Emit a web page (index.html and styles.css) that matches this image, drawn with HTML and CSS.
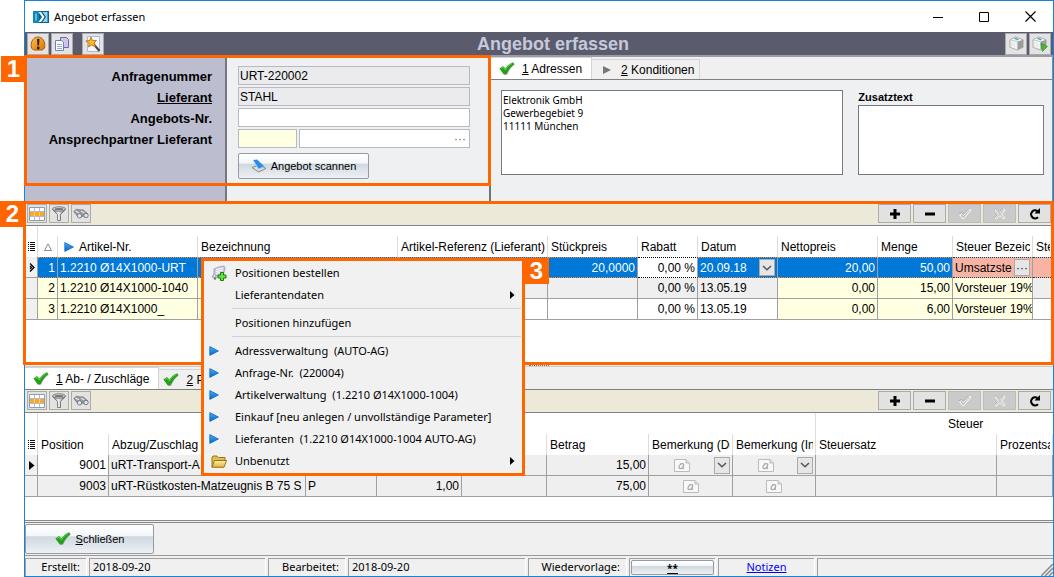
FILE: index.html
```html
<!DOCTYPE html>
<html lang="de">
<head>
<meta charset="utf-8">
<title>Angebot erfassen</title>
<link rel="stylesheet" href="styles.css">
</head>
<body>
<svg class="defs" aria-hidden="true">
  <defs>
    <linearGradient id="g-blue" x1="0" y1="0" x2="0" y2="1"><stop offset="0" stop-color="#45aefb"/><stop offset="1" stop-color="#0a62c4"/></linearGradient>
    <linearGradient id="g-orange" x1="0" y1="0" x2="1" y2="1"><stop offset="0" stop-color="#ffbe4a"/><stop offset="1" stop-color="#df7400"/></linearGradient>
    <linearGradient id="g-gray" x1="0" y1="0" x2="1" y2="0"><stop offset="0" stop-color="#5f5f5f"/><stop offset=".45" stop-color="#f2f2f2"/><stop offset="1" stop-color="#6b6b6b"/></linearGradient>
    <linearGradient id="g-folder" x1="0" y1="0" x2="0" y2="1"><stop offset="0" stop-color="#fff2a8"/><stop offset="1" stop-color="#e2b13c"/></linearGradient>
    <symbol id="check" viewBox="0 0 16 14"><path d="M1.5 7.2 4.8 5.3 7 8.1C9 4.800 11.400 2.500 14.800 1.200L15.800 2.600C12.400 5 10 8.200 8.200 12.600L5.800 12.900Z" fill="#777" opacity=".6"/><path d="M.4 6.400 4 4 6.400 6.600C8.400 3.600 10.800 1.400 14.200.3L15.200 2.200C11.800 4.600 9.600 7.800 7.600 12.200L4.800 12.400Z" fill="#25a01b"/><path d="M2 6.500 3.900 5.200 6.300 8C8.200 5 10.400 2.700 13.200 1.500" stroke="#66d251" fill="none"/></symbol>
    <symbol id="play" viewBox="0 0 10 10"><path d="M.8.6 9.400 5 .8 9.400Z" fill="url(#g-blue)" stroke="#0b6bce" stroke-width=".8"/></symbol>
    <symbol id="grid" viewBox="0 0 16 14"><path fill="#fff" stroke="#8c9cb8" d="M.5.5h15v13H.5Z"/><path fill="#f7a928" d="M1 4.500h14v5H1Z"/><path d="M5.500 1v12M10.500 1v12M1 4.500h14M1 9.500h14" stroke="#b6b9cf" fill="none"/><path d="M5.500 5v4M10.500 5v4" stroke="#ffcf70" fill="none"/></symbol>
    <symbol id="funnel" viewBox="0 0 16 15"><path d="M1.500 3.500 6.500 8.600V14.500H9.500V8.600L14.500 3.500Z" fill="url(#g-gray)" stroke="#666" stroke-width=".8"/><ellipse cx="8" cy="3" rx="6.500" ry="2.200" fill="#ddd" stroke="#666" stroke-width=".8"/><ellipse cx="8" cy="3.200" rx="4.500" ry="1.100" fill="#777"/></symbol>
    <symbol id="binoc" viewBox="0 0 16 12"><path d="M.8 3.500 3.500 1.200 7 2 10 1.800 15 6 13.500 9.500 10 8 6.500 9.500 3 6.500Z" fill="#9a9a9a" stroke="#6d6d6d" stroke-width=".7"/><path d="M2.500 3 6 5M8 3 11.500 5" stroke="#e8e8e8" stroke-width="1.200"/><circle cx="6.500" cy="7.800" r="2.200" fill="#d6e7f5" stroke="#666" stroke-width=".8"/><circle cx="13" cy="7.500" r="2.200" fill="#d6e7f5" stroke="#666" stroke-width=".8"/></symbol>
    <symbol id="plus" viewBox="0 0 10 10"><path d="M3.500 0h3v3.500H10v3H6.500V10h-3V6.500H0v-3h3.500Z"/></symbol>
    <symbol id="minus" viewBox="0 0 10 10"><path d="M0 3.500h10v3H0Z"/></symbol>
    <symbol id="tick" viewBox="0 0 14 12"><path d="M1.500 6.500 4 5.500 5.500 7.500 11 1.500 13 2 6 10.500 4.500 10.500Z" fill="#c4c4c4" stroke="#fff"/><path d="M.8 5.800 4 4.600 5.300 6.400 11 .6" fill="none" stroke="#999" stroke-width=".7"/></symbol>
    <symbol id="cross" viewBox="0 0 12 12"><path d="M1 2 2.500 1 6 4.500 9.500 1 11 2.200 7.500 6 11 9.800 9.500 11 6 7.500 2.500 11 1 9.800 4.500 6Z" fill="#c4c4c4" stroke="#fff"/><path d="M.5 1.800 2 .5 5.500 3.800 9 .5M.5 9.800 3.500 6.300" fill="none" stroke="#999" stroke-width=".7"/></symbol>
    <symbol id="reload" viewBox="0 0 12 12"><path d="M9 9.200A4 4 0 1 1 8.500 3.200" fill="none" stroke="#000" stroke-width="2.200"/><path d="M11 0V5.500H5.500Z"/></symbol>
    <symbol id="list" viewBox="0 0 7 9"><path d="M0 .5h1M0 2.500h1M0 4.500h1M0 6.500h1M0 8.500h1M2 .5h5M2 2.500h5M2 4.500h5M2 6.500h5M2 8.500h5" stroke="#111"/></symbol>
    <symbol id="chev" viewBox="0 0 10 6"><path d="M1 1 5 4.800 9 1" fill="none" stroke="#555" stroke-width="1.500"/></symbol>
    <symbol id="note" viewBox="0 0 16 13"><path d="M.5.500H12L15.500 4V12.500H.5Z" fill="#f8f8f8" stroke="#bbb"/><path d="M12 .5V4h3.500" fill="#ddd" stroke="#bbb"/><path d="M9.800 5.200C8 3.900 5 5.600 5 8.200 5 10.300 8 10.200 9.300 7.200L9.800 5.200 9 9.300 10 9.600M5.900 5.200 7.600 4.600" fill="none" stroke="#aaa" stroke-width="1.300"/></symbol>
    <symbol id="box" viewBox="0 0 16 16"><path d="M1 4 7 1 15 4V12L9 15 1 12Z" fill="#f5f5f5" stroke="#aaa"/><path d="M9 6 15 4V12L9 15Z" fill="#9b9b9b"/><path d="M1 4 9 6V15" fill="none" stroke="#c2c2c2"/><path d="M6 2.500 10 4" stroke="#3aa0c8" stroke-width="1.500"/><path d="M3 6v5M5.500 7v5" stroke="#ddd"/></symbol>
    <symbol id="folder" viewBox="0 0 16 13"><path d="M1 12V2.500L2 1h4l1.500 1.500H14V6" fill="#e5bc55" stroke="#9b7316"/><path d="M1 12.300 3.500 5.500H15.500L13 12.300Z" fill="url(#g-folder)" stroke="#9b7316"/></symbol>
  </defs>
</svg>

<main class="window">
  <header class="titlebar">
    <svg class="logo" viewBox="0 0 16 12"><path fill="#1585b8" d="M0 0h6v12H0Z"/><path fill="#0d5f91" d="M6 0h10v12H6Z"/><path d="M2 2.500h2v7H2Z" fill="#53c0e3"/><path d="M5.500 1H8l3.500 5L8 11H5.500L9 6Z" fill="#fff"/><path d="M9.500 1H14.500V11H9.500L13 6Z" fill="#8bd8ee"/></svg>
    <span class="caption">Angebot erfassen</span>
    <div class="sysbuttons">
      <button aria-label="Minimieren"><svg width="10" height="10"><path d="M0 5.500h10" stroke="#000"/></svg></button>
      <button aria-label="Maximieren"><svg width="10" height="10"><path d="M.5.500h9v9h-9Z" fill="none" stroke="#000"/></svg></button>
      <button aria-label="Fenster zumachen"><svg width="11" height="11"><path d="M.5.500l10 10M10.500.500l-10 10" stroke="#000" stroke-width="1.200"/></svg></button>
    </div>
  </header>

  <div class="mainbar">
    <div class="tools">
      <button class="tool" aria-label="Hinweis"><svg width="16" height="16" viewBox="0 0 16 16"><path d="M1.500 12C0 5 4 1 8 1s8 4 6.500 11l-2 2h-9Z" fill="url(#g-orange)" stroke="#a85b05"/><path d="M7 3h2.500L9 9.500H7.500Z" fill="#222"/><circle cx="8.200" cy="12" r="1.400" fill="#222"/></svg></button>
      <button class="tool" aria-label="Kopieren"><svg width="16" height="16" viewBox="0 0 16 16"><path d="M6.500 1.500h6l2 2v8h-8Z" fill="#cfc4ea" stroke="#7666a5"/><path d="M1.500 4.500h6l2 2v8h-8Z" fill="#fff" stroke="#6d7fb5"/><path d="M3 8.500h5M3 10.500h5M3 12.500h5" stroke="#8eaee0"/></svg></button>
      <button class="tool spaced" aria-label="Assistent"><svg width="16" height="16" viewBox="0 0 16 16"><path d="M2.500.500h12v15h-12Z" fill="#f4f8fd" stroke="#a7bad8"/><path d="M8.500 8 14.500 15" stroke="#444" stroke-width="2"/><path d="M6 1 7.500 4.500 11.500 4.500 9 7 10.500 11 6.700 9 3.500 11 4 7.200.8 5 4.800 4.400Z" fill="#ffb629" stroke="#bd6b0d" stroke-width=".8"/></svg></button>
    </div>
    <h1>Angebot erfassen</h1>
    <div class="tools end">
      <button class="tool" aria-label="Paket"><svg width="15" height="15"><use href="#box"/></svg></button>
      <button class="tool" aria-label="Paket starten"><svg width="16" height="16" viewBox="0 0 16 16"><use href="#box" width="15" height="15"/><path d="M9 7.500 15.500 10.500 10.500 15.500Z" fill="#45bd2b" stroke="#268a17" stroke-width=".6"/></svg></button>
    </div>
  </div>

  <section class="head">
    <form class="form">
      <div class="labels">
        <label for="anfrage">Anfragenummer</label>
        <label for="lieferant"><u>Lieferant</u></label>
        <label for="angebot">Angebots-Nr.</label>
        <label for="partner">Ansprechpartner Lieferant</label>
      </div>
      <div class="fields">
        <input id="anfrage" class="field locked" value="URT-220002" readonly>
        <input id="lieferant" class="field locked" value="STAHL" readonly>
        <input id="angebot" class="field">
        <div class="pair">
          <input id="partner" class="field key">
          <div class="lookup"><input class="bare" aria-label="Name des Ansprechpartners"><button type="button" aria-label="Auswählen">···</button></div>
        </div>
        <button type="button" class="glossy scan"><svg width="16" height="14" viewBox="0 0 16 14"><path d="M1 8.500 8 6 15 9.500 7.500 13Z" fill="#ddd" stroke="#888"/><path d="M2 1 6 .5 13.500 7.500 7.500 10Z" fill="#2c8be4"/><path d="M2 1 7.500 10 13.500 7.500" fill="none" stroke="#9bd0fa"/></svg>Angebot scannen</button>
      </div>
    </form>
    <div class="details">
      <nav class="tabs">
        <button class="tab active"><svg width="16" height="14"><use href="#check"/></svg><span><u>1</u> Adressen</span></button>
        <button class="tab plain"><svg width="9" height="8"><path d="M0 0 8 4 0 8Z" fill="#777"/></svg><span><u>2</u> Konditionen</span></button>
      </nav>
      <div class="address">
        <textarea class="memo" aria-label="Adresse">Elektronik GmbH
Gewerbegebiet 9
11111 München</textarea>
        <div class="extra"><label for="zusatz">Zusatztext</label><textarea id="zusatz" class="memo"></textarea></div>
      </div>
    </div>
  </section>

  <section class="positions">
    <div class="gridbar">
      <button class="mini" aria-label="Spalten"><svg width="16" height="14"><use href="#grid"/></svg></button>
      <button class="mini" aria-label="Filter"><svg width="16" height="15"><use href="#funnel"/></svg></button>
      <button class="mini" aria-label="Suchen"><svg width="16" height="12"><use href="#binoc"/></svg></button>
      <div class="edit">
        <button aria-label="Hinzufügen"><svg width="10" height="10"><use href="#plus"/></svg></button>
        <button aria-label="Löschen"><svg width="10" height="10"><use href="#minus"/></svg></button>
        <button aria-label="Übernehmen" disabled><svg width="14" height="12"><use href="#tick"/></svg></button>
        <button aria-label="Verwerfen" disabled><svg width="12" height="12"><use href="#cross"/></svg></button>
        <button aria-label="Aktualisieren"><svg width="12" height="12"><use href="#reload"/></svg></button>
      </div>
    </div>
    <table class="data items">
      <colgroup><col class="w13"><col class="w20"><col class="w140"><col class="w200"><col class="w150"><col class="w90"><col class="w60"><col class="w80"><col class="w100"><col class="w75"><col class="w80"><col></colgroup>
      <thead><tr>
        <th class="sel full"><svg width="7" height="9"><use href="#list"/></svg></th>
        <th class="sel"><svg width="8" height="8"><path d="M.5 7.500h7L4 .8Z" fill="none" stroke="#888"/></svg></th>
        <th><svg class="lead" width="10" height="10"><use href="#play"/></svg>Artikel-Nr.</th>
        <th>Bezeichnung</th><th>Artikel-Referenz (Lieferant)</th><th>Stückpreis</th><th>Rabatt</th><th>Datum</th><th>Nettopreis</th><th>Menge</th><th>Steuer Bezeichnung</th><th>Steuer</th>
      </tr></thead>
      <tbody>
        <tr class="selected">
          <td class="handle"><svg width="6" height="9"><path d="M1 .5 5 4.500 1 8.500M1 3 2.500 4.500 1 6" fill="none" stroke="#000" stroke-width="1.300"/></svg></td>
          <td class="num">1</td><td>1.2210 Ø14X1000-URT</td><td></td><td></td><td class="num">20,0000</td><td class="num plain">0,00 %</td>
          <td><div class="combo">20.09.18<button aria-label="Datum wählen"><svg width="10" height="6"><use href="#chev"/></svg></button></div></td>
          <td class="num">20,00</td><td class="num">50,00</td>
          <td class="alert"><div class="combo">Umsatzste<button aria-label="Steuer wählen">···</button></div></td><td class="alert"></td>
        </tr>
        <tr class="even">
          <td class="handle"></td><td class="num key">2</td><td class="key">1.2210 Ø14X1000-1040</td><td class="key"></td><td></td><td></td><td class="num">0,00 %</td><td>13.05.19</td><td class="num key">0,00</td><td class="num key">15,00</td><td class="key">Vorsteuer 19%</td><td></td>
        </tr>
        <tr>
          <td class="handle"></td><td class="num key">3</td><td class="key">1.2210 Ø14X1000_</td><td class="key"></td><td></td><td></td><td class="num">0,00 %</td><td>13.05.19</td><td class="num key">0,00</td><td class="num key">6,00</td><td class="key">Vorsteuer 19%</td><td></td>
        </tr>
      </tbody>
    </table>
  </section>

  <div class="splitter"><i></i></div>

  <section class="charges">
    <nav class="tabs">
      <button class="tab active"><svg width="16" height="14"><use href="#check"/></svg><span><u>1</u> Ab- / Zuschläge</span></button>
      <button class="tab"><svg width="16" height="14"><use href="#check"/></svg><span><u>2</u> P</span></button>
    </nav>
    <div class="gridbar slim">
      <button class="mini" aria-label="Spalten"><svg width="16" height="14"><use href="#grid"/></svg></button>
      <button class="mini" aria-label="Filter"><svg width="16" height="15"><use href="#funnel"/></svg></button>
      <button class="mini" aria-label="Suchen"><svg width="16" height="12"><use href="#binoc"/></svg></button>
      <div class="edit">
        <button aria-label="Hinzufügen"><svg width="10" height="10"><use href="#plus"/></svg></button>
        <button aria-label="Löschen"><svg width="10" height="10"><use href="#minus"/></svg></button>
        <button aria-label="Übernehmen" disabled><svg width="14" height="12"><use href="#tick"/></svg></button>
        <button aria-label="Verwerfen" disabled><svg width="12" height="12"><use href="#cross"/></svg></button>
        <button aria-label="Aktualisieren"><svg width="12" height="12"><use href="#reload"/></svg></button>
      </div>
    </div>
    <table class="data">
      <colgroup><col class="w13"><col class="w71"><col class="w197"><col class="w71"><col class="w85"><col class="w85"><col class="w102"><col class="w84"><col class="w83"><col class="w181"><col></colgroup>
      <thead>
        <tr class="groups"><th class="full"></th><th class="full" colspan="8"></th><th class="group" colspan="2">Steuer</th></tr>
        <tr><th class="sel full"><svg width="7" height="9"><use href="#list"/></svg></th><th>Position</th><th>Abzug/Zuschlag</th><th></th><th></th><th></th><th>Betrag</th><th>Bemerkung (Druck)</th><th>Bemerkung (Intern)</th><th>Steuersatz</th><th>Prozentsatz</th></tr>
      </thead>
      <tbody>
        <tr class="even">
          <td class="handle"><svg width="6" height="9"><path d="M0 0 5.500 4.500 0 9Z"/></svg></td><td class="num white">9001</td><td>uRT-Transport-A</td><td></td><td></td><td></td><td class="num">15,00</td>
          <td><div class="combo memoicon"><svg width="16" height="13"><use href="#note"/></svg><button aria-label="Bemerkung öffnen"><svg width="10" height="6"><use href="#chev"/></svg></button></div></td>
          <td><div class="combo memoicon"><svg width="16" height="13"><use href="#note"/></svg><button aria-label="Interne Bemerkung öffnen"><svg width="10" height="6"><use href="#chev"/></svg></button></div></td><td></td><td></td>
        </tr>
        <tr class="even">
          <td class="handle"></td><td class="num">9003</td><td>uRT-Rüstkosten-Matzeugnis B 75 S</td><td>P</td><td class="num">1,00</td><td></td><td class="num">75,00</td><td class="mid"><svg width="16" height="13"><use href="#note"/></svg></td><td class="mid"><svg width="16" height="13"><use href="#note"/></svg></td><td></td><td></td>
        </tr>
      </tbody>
    </table>
  </section>

  <div class="actions"><button class="glossy close"><svg width="16" height="14"><use href="#check"/></svg><span><u>S</u>chließen</span></button></div>

  <footer class="status">
    <span class="right">Erstellt:</span><span>2018-09-20</span><span class="right">Bearbeitet:</span><span>2018-09-20</span><span class="right">Wiedervorlage:</span>
    <span class="holder"><button class="glossy stars"><u>**</u></button></span>
    <span class="center"><a href="#notizen">Notizen</a></span>
    <span class="grip"><svg width="12" height="12"><path d="M0 12 12 0M4 12 12 4M8 12 12 8" stroke="#888" stroke-width="1.500"/></svg></span>
  </footer>
</main>

<div class="frame frame-form"></div><b class="badge badge-1">1</b>
<div class="frame frame-grid"></div><b class="badge badge-2">2</b>
<ul class="menu">
  <li><button><svg width="16" height="16" viewBox="0 0 16 16"><path d="M3 4 8 2 13 1 14 3 12.500 9 5 11 3 9Z" fill="#c9cbe4" stroke="#a3a6c2"/><path d="M5 4.500 12 3M5 6.500 12 5M5 8.500 11 7" stroke="#fff"/><path d="M3 9 1 12h7" fill="none" stroke="#999"/><circle cx="4" cy="13.500" r="1.300" fill="#777"/><path d="M9.500 7.500h3v2.500H15v3h-2.500v2.500h-3V13H7v-3h2.500Z" fill="#6ce03d" stroke="#138013"/></svg>Positionen bestellen</button></li>
  <li><button><i></i>Lieferantendaten<svg class="sub" width="5" height="8"><path d="M0 0 4.500 4 0 8Z"/></svg></button></li>
  <li class="sep"></li>
  <li><button><i></i>Positionen hinzufügen</button></li>
  <li class="sep"></li>
  <li><button><svg width="10" height="10"><use href="#play"/></svg>Adressverwaltung&nbsp; (AUTO-AG)</button></li>
  <li><button><svg width="10" height="10"><use href="#play"/></svg>Anfrage-Nr.&nbsp; (220004)</button></li>
  <li><button><svg width="10" height="10"><use href="#play"/></svg>Artikelverwaltung&nbsp; (1.2210 Ø14X1000-1004)</button></li>
  <li><button><svg width="10" height="10"><use href="#play"/></svg>Einkauf [neu anlegen / unvollständige Parameter]</button></li>
  <li><button><svg width="10" height="10"><use href="#play"/></svg>Lieferanten&nbsp; (1.2210 Ø14X1000-1004 AUTO-AG)</button></li>
  <li><button><svg width="16" height="13"><use href="#folder"/></svg>Unbenutzt<svg class="sub" width="5" height="8"><path d="M0 0 4.500 4 0 8Z"/></svg></button></li>
</ul>
<b class="badge badge-3">3</b>
</body>
</html>
```
FILE: styles.css
```css
:root {
  --mark: #ff6600;
  --line: #a0a0a0;
  --face: #f0f0f0;
  --ui: "Noto Sans", "Open Sans", sans-serif;
}
* { box-sizing: border-box; }
body {
  margin: 0;
  padding-left: 24px;
  position: relative;
  background: #fff;
  color: #000;
  font: 12px/14px "Liberation Sans", Arial, sans-serif;
}
button, input, textarea { font: inherit; color: inherit; margin: 0; }
button { padding: 0; border: 0; background: none; }
svg { display: block; flex: none; }
.defs { position: absolute; width: 0; height: 0; }

.window {
  display: flex;
  flex-direction: column;
  min-height: 100vh;
  border: 1px solid #1883d7;
  background: var(--face);
  overflow: hidden;
}

/* title bar */
.titlebar { display: flex; align-items: center; height: 31px; padding-left: 8px; background: #fff; }
.logo { width: 16px; height: 12px; }
.caption { margin-left: 5px; font: 11px/16px var(--ui); }
.sysbuttons { display: flex; margin-left: auto; }
.sysbuttons button { display: flex; align-items: center; justify-content: center; width: 46px; height: 29px; }

.mainbar {
  display: grid;
  grid-template-columns: 1fr auto 1fr;
  align-items: center;
  height: 25px;
  padding: 0 2px;
  border-bottom: 2px solid #9b9ba3;
  background: #5a5c6e;
}
.mainbar h1 { margin: 0; padding-left: 28px; color: #c6c9da; font-size: 18px; line-height: 20px; }
.tools { display: flex; gap: 2px; }
.tools.end { justify-content: flex-end; }
.tool { display: flex; align-items: center; justify-content: center; width: 22px; height: 22px; border: 1px solid #a8a8ae; background: #e3e3e3; }
.tool.spaced { margin-left: 7px; }

/* form and details */
.head { display: flex; height: 144px; }
.form { display: flex; flex: none; width: 466px; border-right: 2px solid #707277; }
.labels {
  display: flex;
  flex-direction: column;
  flex: none;
  width: 202px;
  padding: 9px 13px 0 0;
  border-right: 2px solid #77787f;
  background: #bcbdce;
  text-align: right;
  font-weight: bold;
  font-size: 13px;
  line-height: 21px;
}
.fields { display: flex; flex-direction: column; flex: 1; min-width: 0; gap: 2px; padding: 9px 19px 0 11px; background: #eff0f2; }
.field, .lookup { height: 19px; width: 100%; padding: 0 1px; border: 1px solid #b7b9c3; background: #fff; }
.field.locked { background: #ebebed; }
.pair { display: flex; gap: 2px; }
.pair .field.key { width: 59px; flex: none; background: #ffffe1; }
.lookup { display: flex; flex: 1; min-width: 0; }
.bare { flex: 1; min-width: 0; border: 0; padding: 0; background: none; }
.lookup button { width: 16px; color: #666; line-height: 14px; }
.glossy {
  display: flex;
  align-items: center;
  justify-content: center;
  border: 1px solid #969aa5;
  border-radius: 2px;
  background: linear-gradient(#fff 0, #f4f6f9 38%, #cfd8e0 42%, #eef1f4 100%);
}
.scan { gap: 4px; width: 131px; height: 26px; margin: 3px 0 0; font-size: 11px; }

.details { display: flex; flex-direction: column; flex: 1; min-width: 0; background: #eff0f2; border-right: 1px solid #888; }
.tabs { display: flex; align-items: flex-end; height: 23px; border-bottom: 1px solid #808080; background: var(--face); }
.tab { display: flex; align-items: center; gap: 7px; height: 20px; padding: 0 5px 0 4px; border: 1px solid #d4d4d4; border-width: 1px 1px 0 0; }
.tab.active { height: 22px; padding: 0 9px 0 8px; background: #fff; }
.tab.plain { gap: 9px; padding-left: 11px; }
.tab span { white-space: nowrap; }
.address { display: grid; grid-template-columns: 343fr 186fr; gap: 15px; flex: 1; padding: 10px 8px 26px 10px; }
.memo { display: block; width: 100%; height: 100%; padding: 3px 1px; border: 1px solid #77797c; background: #fff; resize: none; font: 10px/13px var(--ui); }
.extra { display: flex; flex-direction: column; font-size: 11px; font-weight: bold; line-height: 15px; }
.extra .memo { flex: 1; min-height: 0; }

/* grids */
.gridbar { display: flex; gap: 2px; height: 25px; padding: 3px 2px 0; border-bottom: 1px solid #80818c; background: #ece9d8; }
.gridbar.slim { height: 23px; padding-top: 1px; }
.mini, .edit button { display: flex; align-items: center; justify-content: center; width: 20px; height: 19px; border: 1px solid #ababab; background: #e2e2e2; }
.edit { display: flex; gap: 2px; margin-left: auto; }
.edit button { width: 33px; }
.edit button:disabled { background: #cacaca; border-color: #bcbcbc; }
.positions { display: flex; flex-direction: column; flex: 1; background: #fff; }
.charges { padding-bottom: 23px; border-bottom: 1px solid #888; background: #fff; }

.data { width: 100%; table-layout: fixed; border-collapse: separate; border-spacing: 0; }
.w13 { width: 13px; } .w20 { width: 20px; } .w60 { width: 60px; } .w71 { width: 71px; }
.w75 { width: 75px; } .w80 { width: 80px; } .w83 { width: 83px; } .w84 { width: 84px; }
.w85 { width: 85px; } .w90 { width: 90px; } .w100 { width: 100px; } .w102 { width: 102px; }
.w140 { width: 140px; } .w150 { width: 150px; } .w181 { width: 181px; } .w197 { width: 197px; } .w200 { width: 200px; }
.data th, .data td { overflow: hidden; white-space: nowrap; text-align: left; }
.data th {
  height: 21px;
  padding: 0 0 0 3px;
  border-right: 3px solid transparent;
  font-weight: normal;
  background: linear-gradient(#dcdcdc, #dcdcdc) right bottom / 1px 21px no-repeat border-box;
}
.data th.full { background-size: 1px 100%; }
.data th.group { padding-left: 132px; background: none; }
.items th { height: 31px; padding-top: 10px; }
.data th.sel { padding-left: 3px; }
.data .sel svg { margin: 0 auto; }
.lead { display: inline-block; vertical-align: -1px; margin: 0 5px 0 3px; }
.data td { height: 21px; padding: 0 2px; border: solid var(--line); border-width: 0 1px 1px 0; }
.data td.num { text-align: right; padding-right: 2px; }
.even td { background: #efefef; }
.data td.handle { padding: 0 2px 0 4px; background: var(--face); }
.data td.key { background: #ffffe1; }
.data td.white { background: #fff; }
.data .mid svg { margin: 0 auto; }
.data .selected td:not(.handle) { border-top: 1px dotted #ff8728; border-bottom: 1px dotted #ff8728; background: #0078d7; color: #fff; }
.data .selected td.plain { border-top-color: #000; border-bottom-color: #000; background: #fff; color: #000; }
.data .selected td.alert { border-top-color: #084b5c; border-bottom-color: #084b5c; background: #f7b4a5; color: #000; }
.combo { display: flex; align-items: center; justify-content: space-between; height: 18px; }
.combo button { display: flex; align-items: center; justify-content: center; flex: none; width: 16px; height: 17px; border: 1px solid #aaa; background: #e6e6e6; color: #222; }
.memoicon { padding-left: 23px; }

.splitter { height: 3px; border-bottom: 1px solid #c8cad0; }
.splitter i { display: block; width: 20px; height: 2px; margin: 0 auto; border-bottom: 1px dotted #777; }

.actions { margin-top: 1px; padding: 1px 0; border-top: 1px solid #888; border-bottom: 1px solid #999; }
.close { gap: 5px; width: 129px; height: 30px; font-size: 11px; }

.status { display: grid; grid-template-columns: 61px 176px 77px 177px 98px 86px 96px 1fr; gap: 3px; padding-top: 2px; font: 11px/16px var(--ui); }
.status > span { height: 18px; padding: 0 3px; border: solid var(--line); border-width: 1px 0 0 1px; box-shadow: 1px 0 #fff; white-space: nowrap; }
.status .right { text-align: right; padding-right: 6px; }
.status .center { text-align: center; }
.status .holder { padding: 1px 1px 0; }
.stars { width: 100%; height: 15px; font-size: 10px; line-height: 12px; font-weight: bold; }
.status a { color: #00f; }
.status .grip { display: flex; justify-content: flex-end; align-items: flex-end; padding: 0; }

/* numbered callouts over the window */
.frame { position: absolute; border: 3px solid var(--mark); pointer-events: none; }
.frame-form { left: 24px; top: 55px; width: 467px; height: 131px; }
.frame-grid { left: 23px; right: 0; top: 201px; height: 164px; }
.badge { position: absolute; width: 25px; height: 26px; background: var(--mark); color: #fff; font-size: 24px; line-height: 26px; text-align: center; }
.badge-1 { left: 1px; top: 56px; }
.badge-2 { left: 0; top: 201px; }
.badge-3 { left: 524px; top: 258px; }

.menu { position: absolute; left: 201px; top: 258px; width: 324px; margin: 0; padding: 1px 0; border: 3px solid var(--mark); background: #f1f1f1; list-style: none; font: 11px/16px var(--ui); }
.menu button { display: grid; grid-template-columns: 20px 1fr auto; align-items: center; gap: 6px; width: 100%; height: 22px; padding: 0 7px 0 5px; text-align: left; white-space: nowrap; }
.menu button > :first-child { justify-self: center; }
.menu li > button > svg[width="10"] { justify-self: start; }
.menu .sub { align-self: center; }
.menu .sep { height: 6px; margin: 0 1px 0 28px; background: linear-gradient(#d2d2d2, #d2d2d2) 0 2px / 100% 1px no-repeat; }
```
